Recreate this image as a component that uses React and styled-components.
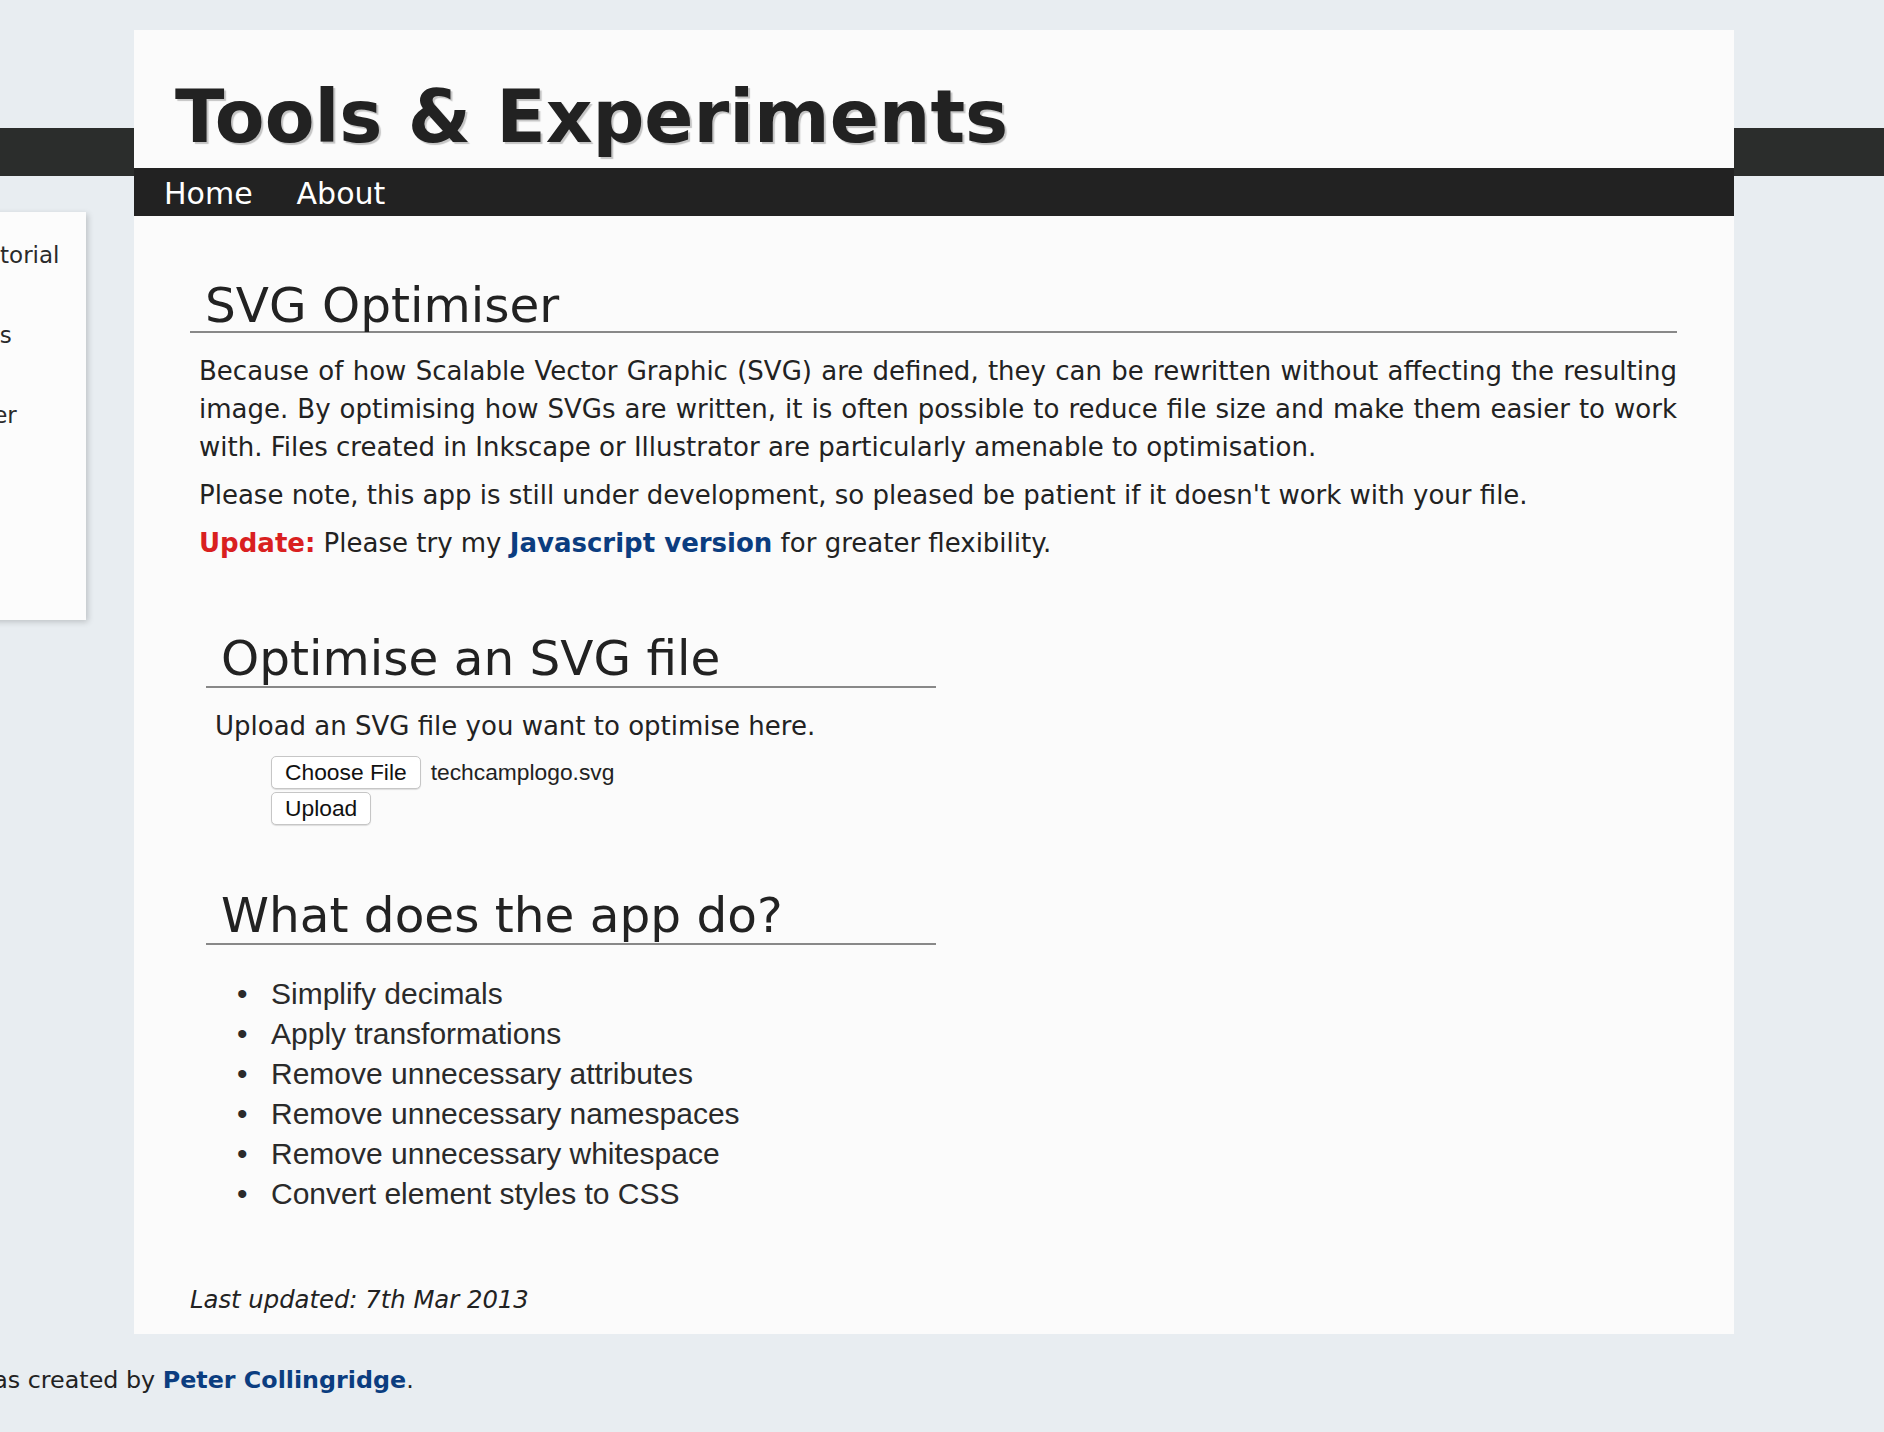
import styled, { createGlobalStyle } from "styled-components";

const GlobalStyle = createGlobalStyle`
  html, body {
    margin: 0;
    padding: 0;
  }
  body {
    min-height: 1432px;
    overflow: hidden;
    font-family: "DejaVu Sans", Verdana, sans-serif;
    color: #222;
    background:
      linear-gradient(
        to bottom,
        transparent 128px,
        #2b2d2c 128px,
        #2b2d2c 176px,
        transparent 176px
      ),
      #e8edf1;
  }
`;

const Page = styled.div`
  display: grid;
  grid-template-columns: 216px 1600px;
  column-gap: 48px;
  margin-left: -130px;
  padding-top: 30px;
`;

const Sidebar = styled.aside`
  margin-top: 182px;
  height: 408px;
  box-sizing: border-box;
  padding: 3px 0 0 51px;
  background: #fcfcfc;
  box-shadow: 2px 2px 6px rgba(0, 0, 0, 0.18);
`;

const SideLink = styled.div`
  font-size: 23px;
  line-height: 80px;
  color: #2a2a2a;
  white-space: nowrap;
`;

const Panel = styled.main`
  background: #fbfbfb;
`;

const Header = styled.header`
  height: 138px;
  box-sizing: border-box;
  padding: 51px 0 0 41px;
`;

const Title = styled.h1`
  margin: 0;
  font-size: 72.5px;
  line-height: 72px;
  font-weight: bold;
  color: #222;
  text-shadow: 2px 2px 1px #c4c4c4;
  white-space: nowrap;
`;

const Nav = styled.nav`
  display: flex;
  gap: 44px;
  height: 48px;
  box-sizing: border-box;
  padding: 4px 0 0 30px;
  background: #222;
`;

const NavLink = styled.a`
  font-size: 30px;
  line-height: 44px;
  color: #fff;
  text-decoration: none;
`;

const Content = styled.div`
  padding: 65px 57px 15px 56px;
`;

const Heading = styled.h2`
  margin: 0 0 19px;
  padding: 0 0 ${(p) => (p.$sub ? "4px 15px" : "2px 15px")};
  font-size: 48.5px;
  line-height: 48px;
  font-weight: normal;
  color: #222;
  border-bottom: 2px solid #888;
`;

const Para = styled.p`
  margin: 0 0 10px 9px;
  font-size: 26px;
  line-height: 38px;
  text-align: justify;
`;

const Update = styled.strong`
  color: #d9201f;
`;

const Link = styled.a`
  color: #0b3d80;
  font-weight: bold;
  text-decoration: none;
`;

const Section = styled.section`
  width: 730px;
  margin: ${(p) => p.$top}px 0 0 16px;
`;

const Form = styled.form`
  display: flex;
  flex-direction: column;
  align-items: flex-start;
  gap: 3px;
  margin: 11px 0 0 65px;
`;

const FileRow = styled.div`
  display: flex;
  align-items: center;
  gap: 10px;
`;

const Button = styled.button`
  height: 33px;
  padding: 0 13px;
  font-family: "Liberation Sans", Arial, sans-serif;
  font-size: 22.8px;
  color: #111;
  background: #fff;
  border: 1px solid #c6c6c6;
  border-radius: 5px;
  box-shadow: 0 1px 1px rgba(0, 0, 0, 0.12);
`;

const FileName = styled.span`
  font-family: "Liberation Sans", Arial, sans-serif;
  font-size: 22.8px;
  color: #222;
`;

const List = styled.ul`
  margin: 29px 0 0;
  padding-left: 65px;
  list-style: none;
  font-family: "Liberation Sans", Arial, sans-serif;
  font-size: 30px;
  line-height: 40px;
  color: #2a2a2a;
`;

const Item = styled.li`
  &::before {
    content: "•";
    display: inline-block;
    width: 34px;
    margin-left: -34px;
  }
`;

const Updated = styled.p`
  margin: 67px 0 0;
  font-size: 24.3px;
  line-height: 38px;
  font-style: italic;
`;

const Footer = styled.footer`
  grid-column: 1 / -1;
  margin: 31px 0 0 -3px;
  font-size: 23.8px;
  line-height: 30px;
  color: #222;
  white-space: nowrap;
`;

const features = [
  "Simplify decimals",
  "Apply transformations",
  "Remove unnecessary attributes",
  "Remove unnecessary namespaces",
  "Remove unnecessary whitespace",
  "Convert element styles to CSS",
];

export default function App() {
  return (
    <>
      <GlobalStyle />
      <Page>
        <Sidebar>
          <SideLink>SVG tutorial</SideLink>
          <SideLink>Projects</SideLink>
          <SideLink>Explorer</SideLink>
        </Sidebar>
        <Panel>
          <Header>
            <Title>Tools &amp; Experiments</Title>
          </Header>
          <Nav>
            <NavLink href="#">Home</NavLink>
            <NavLink href="#">About</NavLink>
          </Nav>
          <Content>
            <Heading>SVG Optimiser</Heading>
            <Para>
              Because of how Scalable Vector Graphic (SVG) are defined, they can
              be rewritten without affecting the resulting image. By optimising
              how SVGs are written, it is often possible to reduce file size and
              make them easier to work with. Files created in Inkscape or
              Illustrator are particularly amenable to optimisation.
            </Para>
            <Para>
              Please note, this app is still under development, so pleased be
              patient if it doesn't work with your file.
            </Para>
            <Para>
              <Update>Update:</Update> Please try my{" "}
              <Link href="#">Javascript version</Link> for greater flexibility.
            </Para>

            <Section $top={72}>
              <Heading as="h3" $sub>
                Optimise an SVG file
              </Heading>
              <Para>Upload an SVG file you want to optimise here.</Para>
              <Form onSubmit={(e) => e.preventDefault()}>
                <FileRow>
                  <Button type="button">Choose File</Button>
                  <FileName>techcamplogo.svg</FileName>
                </FileRow>
                <Button type="submit">Upload</Button>
              </Form>
            </Section>

            <Section $top={66}>
              <Heading as="h3" $sub>
                What does the app do?
              </Heading>
              <List>
                {features.map((f) => (
                  <Item key={f}>{f}</Item>
                ))}
              </List>
            </Section>

            <Updated>Last updated: 7th Mar 2013</Updated>
          </Content>
        </Panel>
        <Footer>
          This site was created by <Link href="#">Peter Collingridge</Link>.
        </Footer>
      </Page>
    </>
  );
}
